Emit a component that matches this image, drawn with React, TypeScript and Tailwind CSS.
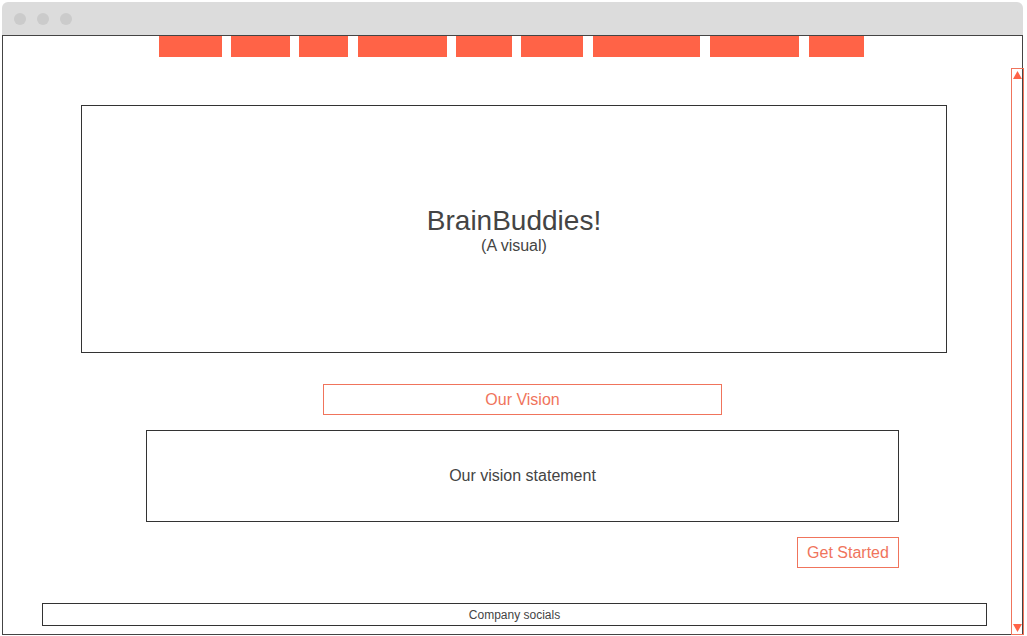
const navItems = [
  { w: 63, ml: 156 },
  { w: 59, ml: 9 },
  { w: 49, ml: 9 },
  { w: 89, ml: 10 },
  { w: 56, ml: 9 },
  { w: 62, ml: 9 },
  { w: 107, ml: 10 },
  { w: 89, ml: 10 },
  { w: 55, ml: 10 },
];

function TitleBar() {
  return (
    <div className="flex h-[33px] items-center gap-[11px] rounded-t-[6px] bg-[#dcdcdc] pl-[12px]">
      <span className="h-[12px] w-[12px] rounded-full bg-[#cbcbcb]" />
      <span className="h-[12px] w-[12px] rounded-full bg-[#cbcbcb]" />
      <span className="h-[12px] w-[12px] rounded-full bg-[#cbcbcb]" />
    </div>
  );
}

function ScrollBar() {
  return (
    <div className="absolute right-[-2px] top-[32px] bottom-[-1px] flex w-[13px] flex-col items-center justify-between border border-[#f0745c] py-[2px]">
      <svg className="block shrink-0" width="9" height="8" viewBox="0 0 9 8">
        <polygon points="4.5,0 9,8 0,8" fill="#ff6347" />
      </svg>
      <svg className="block shrink-0" width="9" height="8" viewBox="0 0 9 8">
        <polygon points="0,0 9,0 4.5,8" fill="#ff6347" />
      </svg>
    </div>
  );
}

export default function App() {
  return (
    <div className="h-[636px] w-[1027px] overflow-hidden bg-white pl-[2px] pt-[2px] font-['Liberation_Sans',Arial,sans-serif] text-[#444]">
      <div className="w-[1021px]">
        <TitleBar />
        <div className="relative h-[600px] border border-[#444]">
          <div className="flex">
            {navItems.map((n, i) => (
              <div key={i} className="h-[21px] bg-[#ff6347]" style={{ width: n.w, marginLeft: n.ml }} />
            ))}
          </div>

          <div className="ml-[78px] mt-[48px] flex h-[248px] w-[866px] flex-col items-center justify-center border border-[#333] pt-[2px]">
            <h1 className="text-[28px] leading-[32px]">BrainBuddies!</h1>
            <p className="text-[16px] leading-[18px]">(A visual)</p>
          </div>

          <div className="ml-[320px] mt-[31px] flex h-[31px] w-[399px] items-center justify-center border border-[#f0745c] text-[16px] text-[#f0745c]">
            Our Vision
          </div>

          <div className="ml-[143px] mt-[15px] flex h-[92px] w-[753px] items-center justify-center border border-[#333] text-[16px]">
            Our vision statement
          </div>

          <div className="ml-[794px] mt-[15px] flex h-[31px] w-[102px] items-center justify-center border border-[#f0745c] text-[16px] text-[#f0745c]">
            Get Started
          </div>

          <div className="ml-[39px] mt-[35px] flex h-[23px] w-[945px] items-center justify-center border border-[#333] text-[12px]">
            Company socials
          </div>

          <ScrollBar />
        </div>
      </div>
    </div>
  );
}
